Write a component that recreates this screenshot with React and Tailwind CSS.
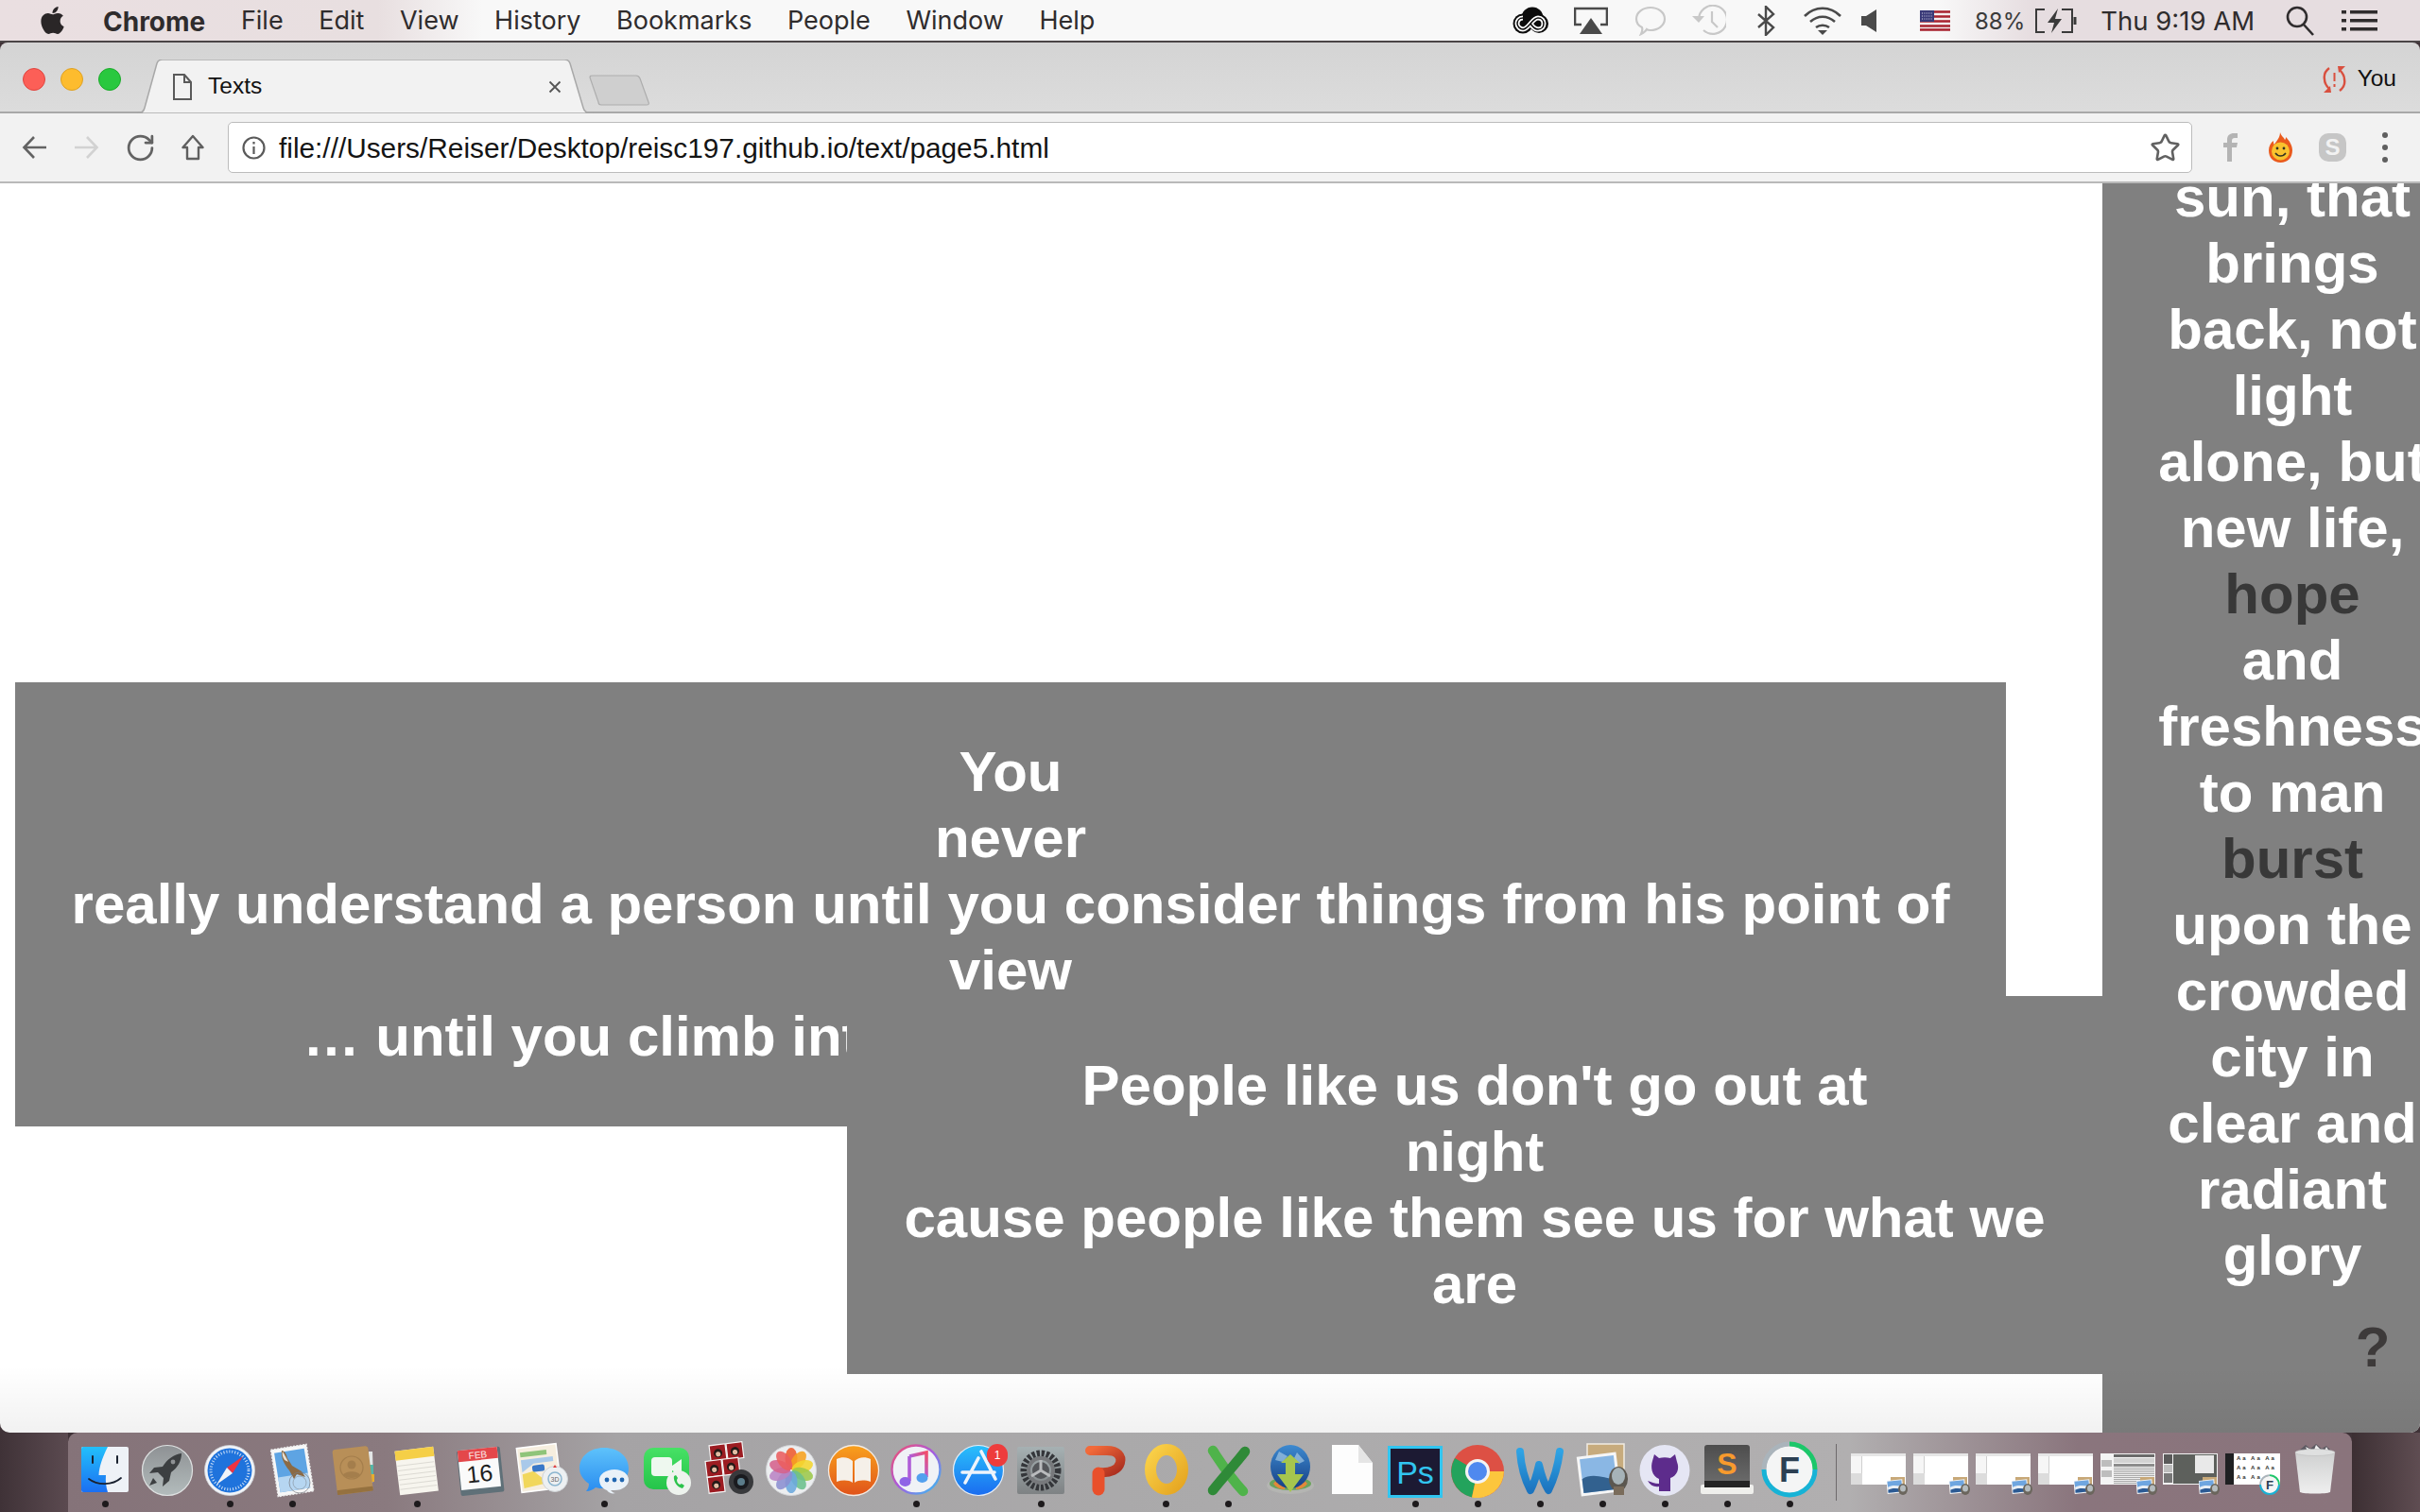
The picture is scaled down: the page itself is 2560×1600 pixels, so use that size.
import React from "react";
import { FaApple } from "react-icons/fa";
import { RotateCw, Star } from "lucide-react";

const Svg = ({ children }) => (
  <svg width="60" height="60" viewBox="0 0 60 60" className="block shrink-0">{children}</svg>
);

const Finder = () => (
  <Svg>
    <defs><linearGradient id="fb" x1="0" y1="0" x2="0" y2="1"><stop offset="0" stopColor="#22c0fb" /><stop offset="1" stopColor="#1b6ff2" /></linearGradient></defs>
    <rect x="5" y="6" width="50" height="48" rx="2" fill="#eef2f7" />
    <path d="M7 6H33C27 18 24 27 23.5 36H31C30.5 42 31 48 33 54H7a2 2 0 0 1-2-2V8a2 2 0 0 1 2-2Z" fill="url(#fb)" />
    <path d="M17 16v7M43 16v7" stroke="#1a2230" strokeWidth="2" strokeLinecap="round" />
    <path d="M13 40c9 7 25 7 34-1" fill="none" stroke="#1a2230" strokeWidth="1.8" strokeLinecap="round" />
  </Svg>
);
const Launchpad = () => (
  <Svg>
    <defs><linearGradient id="lp" x1="0" y1="0" x2="0" y2="1"><stop offset="0" stopColor="#8e9194" /><stop offset="1" stopColor="#b3bcbc" /></linearGradient></defs>
    <circle cx="30" cy="31" r="26.5" fill="url(#lp)" stroke="#dfe2e2" strokeWidth="1.2" />
    <path d="M45 13c-8 1-15 6-20 14l-9 1-5 6 9-1 6 6-1 9 7-6 2-9c7-5 11-12 11-20Z" fill="#3c3f41" />
    <circle cx="36" cy="22" r="2.4" fill="#8e9194" />
    <path d="M15 39l-4 8 8-3Z" fill="#3c3f41" />
  </Svg>
);
const Safari = () => (
  <Svg>
    <circle cx="30" cy="31" r="26.5" fill="#f1f4f8" stroke="#cfd3d8" strokeWidth="0.8" />
    <circle cx="30" cy="31" r="23.5" fill="#1f73dc" />
    <circle cx="30" cy="31" r="20" fill="none" stroke="#cfe1f7" strokeWidth="3" strokeDasharray="1 2" />
    <path d="M44 16 33 34 27 28Z" fill="#ef3340" />
    <path d="M16 46 33 34 27 28Z" fill="#f1f4f8" />
  </Svg>
);
const Mail = () => (
  <Svg>
    <g transform="rotate(-9 30 30)">
      <rect x="11" y="6" width="38" height="50" fill="#f7f7f7" stroke="#ededed" strokeWidth="1.5" strokeDasharray="2 1.4" />
      <rect x="14" y="10" width="32" height="42" fill="#5ea4e3" />
      <rect x="14" y="36" width="32" height="16" fill="#b6d6f1" />
    </g>
    <path d="M19 10c3 0 5 4 6 8l5 8 10 6 4 6-9-3-3 5-5-9c-5-6-9-13-8-21Z" fill="#8b6a44" />
    <path d="M20 11c2 3 4 7 6 11l-4-2c-2-3-3-6-2-9Z" fill="#e6e0d6" />
    <circle cx="38" cy="44" r="11" fill="none" stroke="#777a80" strokeWidth="1" opacity="0.7" />
    <circle cx="38" cy="44" r="7" fill="none" stroke="#777a80" strokeWidth="0.8" opacity="0.6" />
  </Svg>
);
const Contacts = () => (
  <Svg>
    <path d="M45 11h4l1 32-5 2Z" fill="#e3e6e6" />
    <path d="M46 25h4v10h-4Z" fill="#55b6a8" />
    <path d="M46 35h5v8h-5Z" fill="#e8ac2e" />
    <g transform="rotate(-7 28 30)"><rect x="9" y="7" width="38" height="48" rx="3" fill="#b88f58" /><rect x="9" y="50" width="38" height="5" rx="1" fill="#95713f" /></g>
    <circle cx="27" cy="28" r="12" fill="none" stroke="#a47e4c" strokeWidth="1.2" />
    <circle cx="27" cy="25" r="4.5" fill="#a47e4c" />
    <path d="M18 36c2-5 16-5 18 0-4 4-14 4-18 0Z" fill="#a47e4c" />
  </Svg>
);
const Notes = () => (
  <Svg>
    <g transform="rotate(-7 30 30)">
      <rect x="9" y="8" width="41" height="47" fill="#f7f5ee" />
      <rect x="9" y="8" width="41" height="10" fill="#f5cf47" />
      <path d="M10 24h39M10 29h39M10 34h39M10 39h39M10 44h39M10 49h39" stroke="#dcdad3" strokeWidth="1" />
    </g>
  </Svg>
);
const Calendar = () => (
  <Svg>
    <g transform="rotate(-6 30 30)">
      <rect x="8" y="8" width="46" height="48" rx="2" fill="#5f7078" />
      <rect x="9" y="8" width="42" height="42" fill="#fafafa" />
      <rect x="9" y="8" width="42" height="12" fill="#e4474a" />
      <text x="30" y="18" textAnchor="middle" fontFamily="Liberation Sans" fontSize="10" fill="#fbe7e7">FEB</text>
      <text x="30" y="43" textAnchor="middle" fontFamily="Liberation Sans" fontSize="25" fill="#1d1d1d">16</text>
    </g>
  </Svg>
);
const Maps = () => (
  <Svg>
    <g transform="rotate(-7 27 28)">
      <rect x="6" y="5" width="42" height="47" fill="#f6eedf" stroke="#fff" strokeWidth="1.5" />
      <rect x="9" y="10" width="28" height="5" fill="#8fc47a" />
      <path d="M9 18h34v5L22 23l-13 8Z" fill="#a9c9ea" />
      <path d="M9 33l12-2 14 14-26 3Z" fill="#f1d75c" />
      <rect x="20" y="25" width="13" height="7" rx="2" fill="#3a78c8" />
    </g>
    <circle cx="44" cy="40" r="13.5" fill="#edf0f2" stroke="#cfd3d6" />
    <circle cx="44" cy="40" r="7" fill="none" stroke="#8bb5cf" strokeWidth="1.5" />
    <text x="44" y="43" textAnchor="middle" fontFamily="Liberation Sans" fontSize="7" fill="#666">3D</text>
    <path d="M44 25l-2 3h4Z" fill="#e24242" />
  </Svg>
);
const Messages = () => (
  <Svg>
    <defs><linearGradient id="ms" x1="0" y1="0" x2="0" y2="1"><stop offset="0" stopColor="#5ec2fb" /><stop offset="1" stopColor="#2a8df0" /></linearGradient></defs>
    <path d="M30 7c15 0 26 9 26 22 0 12-11 21-26 21-3 0-6 0-9-1-2 2-6 4-10 4 2-2 3-5 3-8C8 41 4 35 4 29 4 16 15 7 30 7Z" fill="url(#ms)" />
    <path d="M41 30c9 0 15 5 15 11s-6 11-15 11l-4 0c1 1 3 3 5 3-3 1-7 0-9-3-5-2-8-6-8-11 0-6 7-11 16-11Z" fill="#e9f1f8" />
    <circle cx="33" cy="41" r="2.4" fill="#1f65b0" /><circle cx="41" cy="41" r="2.4" fill="#1f65b0" /><circle cx="49" cy="41" r="2.4" fill="#1f65b0" />
  </Svg>
);
const FaceTime = () => (
  <Svg>
    <defs><linearGradient id="ft" x1="0" y1="0" x2="0" y2="1"><stop offset="0" stopColor="#47e165" /><stop offset="1" stopColor="#25c44a" /></linearGradient></defs>
    <rect x="6" y="7" width="48" height="44" rx="10" fill="url(#ft)" />
    <rect x="14" y="17" width="22" height="20" rx="4" fill="#eef8ef" />
    <path d="M36 26l10-7v18l-10-6Z" fill="#eef8ef" />
    <circle cx="43" cy="44" r="13" fill="#eef3ee" />
    <path d="M38 37c-1 5 3 12 9 13l2-3-3-2-2 1c-2-1-3-3-3-5l1-2-2-3Z" fill="#2cc34c" />
  </Svg>
);
const PhotoBooth = () => {
  const Cell = ({ x, y }) => (
    <g>
      <rect x={x} y={y} width="17" height="17" fill="#9c1c22" stroke="#f5f5f5" strokeWidth="1.2" />
      <circle cx={x + 8.5} cy={y + 9} r="4.5" fill="#241a18" />
      <circle cx={x + 8.5} cy={y + 10} r="2.6" fill="#e3bca4" />
    </g>
  );
  return (
    <Svg>
      <g transform="rotate(-7 26 28)">
        <Cell x={12} y={3} /><Cell x={30} y={3} /><Cell x={6} y={19} /><Cell x={24} y={19} /><Cell x={6} y={36} />
      </g>
      <circle cx="43" cy="43" r="13" fill="#38393c" />
      <circle cx="43" cy="43" r="8" fill="#1a1b1f" />
      <circle cx="43" cy="43" r="4" fill="#5b7c8a" />
    </Svg>
  );
};
const Photos = () => {
  const cols = ["#ee5b2e", "#f7a21f", "#f4d62e", "#9cc84a", "#6bc08c", "#6ba9dd", "#8b8fd0", "#b984c4", "#d5628c", "#ea5d5f"];
  return (
    <Svg>
      <circle cx="30" cy="31" r="26.5" fill="#eceef0" stroke="#d3d5d8" />
      {cols.map((c, i) => (
        <ellipse key={c} cx="30" cy="18.5" rx="6.5" ry="11.5" fill={c} opacity="0.88" transform={`rotate(${i * 36} 30 31)`} />
      ))}
    </Svg>
  );
};
const Books = () => (
  <Svg>
    <defs><linearGradient id="bk" x1="0" y1="0" x2="0" y2="1"><stop offset="0" stopColor="#f9a11d" /><stop offset="1" stopColor="#e0531a" /></linearGradient></defs>
    <circle cx="30" cy="31" r="26.5" fill="url(#bk)" stroke="#f3ece5" strokeWidth="1.3" />
    <path d="M12 19c6-3 13-2 17 2v23c-4-3-11-3-17-1ZM48 19c-6-3-13-2-17 2v23c4-3 11-3 17-1Z" fill="#f5f0e9" />
  </Svg>
);
const Music = () => (
  <Svg>
    <defs>
      <linearGradient id="mr" x1="0" y1="0" x2="1" y2="1"><stop offset="0" stopColor="#f4506c" /><stop offset="0.5" stopColor="#a65be0" /><stop offset="1" stopColor="#2fc5f2" /></linearGradient>
      <linearGradient id="mn" x1="1" y1="0" x2="0" y2="1"><stop offset="0" stopColor="#f24f6a" /><stop offset="0.55" stopColor="#b05ed8" /><stop offset="1" stopColor="#4e9df0" /></linearGradient>
    </defs>
    <circle cx="30" cy="30" r="25.5" fill="#f0f2f6" stroke="url(#mr)" strokeWidth="2.4" />
    <path d="M23 16l18-4v26" fill="none" stroke="url(#mn)" strokeWidth="3.6" />
    <path d="M23 16v26" stroke="#b05ed8" strokeWidth="3.6" />
    <ellipse cx="18.5" cy="43" rx="6" ry="5" fill="#8f63e6" />
    <ellipse cx="36.5" cy="39" rx="6" ry="5" fill="#53a0ee" />
  </Svg>
);
const AppStore = () => (
  <div className="relative">
    <Svg>
      <defs><linearGradient id="as" x1="0" y1="0" x2="0" y2="1"><stop offset="0" stopColor="#2ac0fb" /><stop offset="1" stopColor="#1a6cf0" /></linearGradient></defs>
      <circle cx="30" cy="31" r="26.5" fill="url(#as)" stroke="#e7eef6" strokeWidth="1.2" />
      <path d="M33 11l15 29M30 18L16 44M13 33h34" stroke="#eef4fb" strokeWidth="3.6" strokeLinecap="round" />
    </Svg>
    <span className="absolute right-[-1px] top-[3px] flex h-[24px] w-[22px] items-center justify-center rounded-full bg-[#ee3c3c] font-['Liberation_Sans'] text-[12px] text-white">1</span>
  </div>
);
const SysPrefs = () => (
  <Svg>
    <defs><linearGradient id="sp" x1="0" y1="0" x2="0" y2="1"><stop offset="0" stopColor="#a6b1b3" /><stop offset="1" stopColor="#7e8284" /></linearGradient></defs>
    <rect x="5" y="6" width="50" height="50" rx="2" fill="url(#sp)" />
    <circle cx="30" cy="31" r="18" fill="none" stroke="#34363a" strokeWidth="7" strokeDasharray="3.2 1.8" />
    <circle cx="30" cy="31" r="13" fill="none" stroke="#77797c" strokeWidth="4" />
    <circle cx="30" cy="31" r="9" fill="#54565a" />
    <path d="M30 31V20M30 31l10 6M30 31l-10 6" stroke="#b9bbbd" strokeWidth="3" />
  </Svg>
);
const PowerP = () => (
  <Svg>
    <defs><linearGradient id="pw" x1="0" y1="0" x2="1" y2="1"><stop offset="0" stopColor="#f26a3a" /><stop offset="1" stopColor="#a92c1e" /></linearGradient></defs>
    <path d="M16 10h18c11 0 16 6 14 13s-10 11-22 10" fill="none" stroke="url(#pw)" strokeWidth="10" strokeLinecap="round" />
    <path d="M25 34v17" fill="none" stroke="#e9502b" strokeWidth="13" strokeLinecap="round" />
  </Svg>
);
const Outlook = () => (
  <Svg>
    <defs><linearGradient id="ol" x1="0" y1="0" x2="1" y2="1"><stop offset="0" stopColor="#fad149" /><stop offset="1" stopColor="#e5a521" /></linearGradient></defs>
    <ellipse cx="31" cy="30" rx="17" ry="21" fill="none" stroke="url(#ol)" strokeWidth="12" />
  </Svg>
);
const Excel = () => (
  <Svg>
    <path d="M14 10c8 12 18 28 32 43" stroke="#4fb34a" strokeWidth="10.500" strokeLinecap="round" fill="none" />
    <path d="M48 11C38 24 25 38 14 52" stroke="#2f8a38" strokeWidth="10.500" strokeLinecap="round" fill="none" />
  </Svg>
);
const Globe = () => (
  <Svg>
    <defs><linearGradient id="gl" x1="0" y1="0" x2="0" y2="1"><stop offset="0" stopColor="#3d8ad0" /><stop offset="1" stopColor="#163f85" /></linearGradient></defs>
    <ellipse cx="30" cy="47" rx="25" ry="9" fill="#b4b5b2" />
    <ellipse cx="30" cy="45" rx="22" ry="7" fill="#6aa35c" />
    <path d="M12 45c4-5 9-6 12-6v12c-5 0-9-2-12-6ZM48 45c-4-5-9-6-12-6v12c5 0 9-2 12-6Z" fill="#e2883a" />
    <ellipse cx="30" cy="27" rx="21" ry="23" fill="url(#gl)" />
    <path d="M18 11l9 5-5 6-8-2ZM37 12l8 9-6 3-5-6Z" fill="#a4c8e2" opacity="0.7" />
    <path d="M30 14l10 9h-5v12h9L30 54 16 35h9V23h-5Z" fill="#a6c64e" />
  </Svg>
);
const Doc = () => (
  <Svg>
    <path d="M8 4h28l15 19v33H8Z" fill="#fdfdfd" />
    <path d="M36 4v19h15Z" fill="#e5e5e5" />
  </Svg>
);
const Ps = () => (
  <div className="flex h-[60px] w-[58px] items-start justify-center">
    <div className="mt-[5px] flex h-[55px] w-[58px] items-center justify-center border-[3px] border-[#31c5f0] bg-[#1c1a33] font-['Liberation_Sans'] text-[34px] leading-none text-[#31c5f0]">Ps</div>
  </div>
);
const Chrome = () => (
  <Svg>
    <circle cx="30" cy="32" r="28" fill="#dd5044" />
    <path d="M30 32 6 18A28 28 0 0 0 24 59.400Z" fill="#23a35c" />
    <path d="M30 32h28A28 28 0 0 1 24 59.400Z" fill="#fcc63d" />
    <circle cx="30" cy="32" r="13" fill="#f4f4f4" />
    <circle cx="30" cy="32" r="10" fill="#4f89ef" />
  </Svg>
);
const Word = () => (
  <Svg>
    <defs><linearGradient id="wd" x1="0" y1="0" x2="0" y2="1"><stop offset="0" stopColor="#2fa3e4" /><stop offset="1" stopColor="#1c74bf" /></linearGradient></defs>
    <path d="M9 11c1 14 4 28 11 41 4-8 7-18 9-27 2 9 5 19 10 27 6-12 10-26 12-41" fill="none" stroke="url(#wd)" strokeWidth="8" strokeLinecap="round" strokeLinejoin="round" />
  </Svg>
);
const Preview = () => (
  <Svg>
    <rect x="14" y="3" width="39" height="42" fill="#c7ab7d" stroke="#f1ece3" strokeWidth="1.5" />
    <g transform="rotate(-7 26 34)">
      <rect x="5" y="14" width="42" height="42" fill="#f6f6f6" />
      <rect x="8" y="17" width="36" height="36" fill="#8ab7e4" />
      <path d="M8 38c10-5 22 0 36 6v9H8Z" fill="#32618f" />
    </g>
    <ellipse cx="47" cy="40" rx="10" ry="13" fill="#5b5750" />
    <ellipse cx="47" cy="37" rx="7" ry="9" fill="#a6b3b8" />
    <rect x="42" y="48" width="11" height="9" fill="#7a6c5b" />
  </Svg>
);
const GitHub = () => (
  <Svg>
    <ellipse cx="30" cy="31" rx="26.5" ry="27" fill="#e5e6f4" />
    <path d="M19 14l5 4c4-1 8-1 12 0l5-4 2 8c3 7 0 15-7 17v14H24v-5c-5 1-9-1-12-6 4 1 7 3 12 3v-5c-8-3-9-13-7-19Z" fill="#5d2c8c" />
  </Svg>
);
const Sublime = () => (
  <Svg>
    <defs><linearGradient id="sb" x1="0" y1="0" x2="0" y2="1"><stop offset="0" stopColor="#4d4d4d" /><stop offset="1" stopColor="#6e6e6e" /></linearGradient></defs>
    <rect x="2" y="46" width="56" height="10" rx="2" fill="#efefec" />
    <path d="M6 7a3 3 0 0 1 3-3h42a3 3 0 0 1 3 3v42H6Z" fill="url(#sb)" />
    <rect x="6" y="42" width="48" height="7" fill="#242424" />
    <text x="30" y="35" textAnchor="middle" fontFamily="Liberation Sans" fontWeight="700" fontSize="32" fill="#f79a2d">S</text>
  </Svg>
);
const Fontlab = ({ size = 60 }) => (
  <svg width={size} height={size} viewBox="0 0 60 60" className="block">
    <circle cx="30" cy="30" r="25" fill="#f4f5f5" />
    <path d="M30 3A27 27 0 0 1 57 30" fill="none" stroke="#1cc76a" strokeWidth="5" />
    <path d="M57 30A27 27 0 0 1 3 30" fill="none" stroke="#17b3d6" strokeWidth="5" />
    <path d="M3 30A27 27 0 0 1 30 3" fill="none" stroke="#aab4bb" strokeWidth="5" />
    <text x="30" y="43" textAnchor="middle" fontFamily="Liberation Sans" fontWeight="700" fontSize="36" fill="#2b3f52">F</text>
  </svg>
);
const Mini = ({ badge }) => (
  <div className={badge ? "absolute bottom-[-11px] right-[0px]" : "absolute bottom-[-11px] right-[-2px]"}>
    {badge ? <Fontlab size={22} /> : (
      <svg width="22" height="19" viewBox="0 0 22 19">
        <rect x="4" y="0" width="15" height="9" fill="#c7a878" />
        <g transform="rotate(-6 9 10)"><rect x="0" y="3" width="17" height="14" fill="#f4f4f4" /><rect x="1" y="4" width="15" height="12" fill="#6fa6e0" /><path d="M1 10c4-2 10-1 15 1v5H1Z" fill="#e8eef5" /><path d="M1 13c4-2 10-1 15 1v2H1Z" fill="#2c5a93" /></g>
        <ellipse cx="17" cy="13" rx="5" ry="6" fill="#6b665d" />
        <ellipse cx="17" cy="12" rx="3" ry="3.600" fill="#b5bcbf" />
      </svg>
    )}
  </div>
);
const Thumb = ({ kind }) => (
  <div className="relative mt-[13px] h-[33px] w-[58px] bg-white">
    {kind === "blank" && (
      <>
        <div className="h-[3px] bg-[#e6e6e6]" />
        <div className="absolute bottom-0 left-0 top-[3px] w-[12px] border-r border-[#d0d0d0] bg-[#f6f6f6]" />
        <div className="absolute bottom-0 left-0 h-[12px] w-[12px] bg-[#dcdcdc]" />
      </>
    )}
    {kind === "web" && (
      <div className="flex h-full gap-[2px] bg-[#f4f4f4] p-[1px]">
        <div className="mt-[6px] flex w-[11px] flex-col gap-[4px]">
          <div className="h-[7px] bg-[#bdbdbd]" />
          <div className="h-[7px] bg-[#bdbdbd]" />
        </div>
        <div className="flex flex-1 flex-col gap-[1px]">
          <div className="h-[3px] bg-[#6a6a6a]" />
          <div className="h-[5px] bg-[#d2d2d2]" />
          <div className="h-[3px] bg-[#8c8c8c]" />
          <div className="flex-1 bg-[repeating-linear-gradient(#aaa_0_1px,#eee_1px_2px)]" />
        </div>
      </div>
    )}
    {kind === "photo" && (
      <div className="flex h-full gap-[1px] bg-[#f2f2f2] p-[1px]">
        <div className="flex w-[9px] flex-col gap-[1px]">
          <div className="h-[10px] bg-[#5a5a5a]" />
          <div className="h-[8px] bg-[#bdbdbd]" />
          <div className="h-[10px] bg-[#777]" />
        </div>
        <div className="flex-1 bg-[#5d605c]" />
        <div className="absolute right-[4px] top-[2px] h-[19px] w-[20px] bg-[#e9e9e9]" />
      </div>
    )}
    {kind === "font" && (
      <div className="flex h-full">
        <div className="w-[9px] bg-[#1f2022]" />
        <div className="flex-1 overflow-hidden pl-[3px] font-['Liberation_Sans'] text-[6px] font-bold leading-[10px] tracking-[2px] text-[#333]">Aa Aa Aa Aa Aa Aa Aa Aa Aa</div>
      </div>
    )}
    <Mini badge={kind === "font"} />
  </div>
);
const ThumbWrap = ({ kind }) => <div className="h-[60px] w-[58px]"><Thumb kind={kind} /></div>;
const Trash = () => (
  <Svg>
    <defs><linearGradient id="tr" x1="0" y1="0" x2="0" y2="1"><stop offset="0" stopColor="#cfd0d0" /><stop offset="1" stopColor="#efefef" /></linearGradient></defs>
    <path d="M13 10l7-6 5 4 6-5 6 5 5-3 6 6-7 4H18Z" fill="#5d5a62" />
    <path d="M20 6l6 3-3 4ZM31 4l5 5-8 3ZM42 6l3 5-6 1Z" fill="#efefef" />
    <path d="M9 12h42l-5 42c-4 2-28 2-32 0Z" fill="url(#tr)" />
    <ellipse cx="30" cy="12" rx="21" ry="3.5" fill="#dfe0e0" stroke="#bdbdbd" strokeWidth="0.6" />
  </Svg>
);

const dockItems = [
  [Finder, true], [Launchpad, false], [Safari, true], [Mail, true], [Contacts, false], [Notes, true],
  [Calendar, false], [Maps, false], [Messages, true], [FaceTime, false], [PhotoBooth, false], [Photos, false],
  [Books, false], [Music, true], [AppStore, false], [SysPrefs, true], [PowerP, false], [Outlook, true],
  [Excel, true], [Globe, false], [Doc, false], [Ps, true], [Chrome, true], [Word, true], [Preview, true],
  [GitHub, true], [Sublime, true], [Fontlab, true],
];

const DockSlot = ({ children, dot }) => (
  <div className="flex w-[66px] shrink-0 flex-col items-center">
    <div className="flex h-[60px] items-start justify-center">{children}</div>
    <div className={dot ? "mt-[3px] h-[7px] w-[7px] rounded-full bg-[#1d1a1c]" : "mt-[3px] h-[7px] w-[7px]"} />
  </div>
);

const Dock = () => (
  <div className="flex h-[84px]">
    <div className="w-[72px] shrink-0 bg-[linear-gradient(90deg,#3f3237,#5b4a50)]" />
    <div className="flex w-[2416px] rounded-t-[10px] bg-[linear-gradient(90deg,#857379_0,#8a7a7f_14%,#a5a3a5_24%,#abaaab_50%,#b1afb0_78%,#8a757d_88%,#8a747c_100%)] pl-[6px] pt-[9px]">
      {dockItems.map(([Icon, dot], i) => (
        <DockSlot key={i} dot={dot}><Icon /></DockSlot>
      ))}
      <div className="ml-[16px] mr-[11px] mt-[3px] h-[60px] w-px shrink-0 bg-[#6e6a6c]" />
      {["blank", "blank", "blank", "blank", "web", "photo", "font"].map((k, i) => (
        <DockSlot key={i}><ThumbWrap kind={k} /></DockSlot>
      ))}
      <DockSlot><Trash /></DockSlot>
    </div>
    <div className="flex-1 bg-[linear-gradient(90deg,#3c2f33,#5f4d52)]" />
  </div>
);

const MenuBar = () => (
  <div className="flex h-[45px] items-center border-b-2 border-[#4a4546] bg-[linear-gradient(90deg,#eadfe1_0,#e8dfe0_400px,#f8f8f8_510px,#f8f8f8_2050px,#e6dde0_2150px,#e6dde0_100%)] font-['Inter','Liberation_Sans',sans-serif] text-[27px] text-[#2f2c2d]">
    <FaApple className="ml-[39px] text-[33px] text-[#2a2627]" />
    <div className="ml-[37px] flex items-center gap-[37.6px] pt-[2px]">
      <span className="text-[28px] font-bold">Chrome</span>
      <span>File</span>
      <span>Edit</span>
      <span>View</span>
      <span>History</span>
      <span>Bookmarks</span>
      <span>People</span>
      <span>Window</span>
      <span>Help</span>
    </div>
    <div className="ml-auto flex items-center pr-[45px]">
      <svg width="38" height="30" viewBox="0 0 38 30" fill="none">
        <circle cx="11" cy="18" r="10.500" fill="#0c0c0c" />
        <circle cx="21" cy="12" r="11.500" fill="#0c0c0c" />
        <circle cx="28" cy="18" r="10" fill="#0c0c0c" />
        <path d="M11 12c-4 0-6 3-6 6s3 6 6 6c6 0 10-12 16-12 4 0 6 3 6 6s-2 6-6 6c-4 0-6-3-8-6" stroke="#fff" strokeWidth="5" />
        <path d="M11 12c-4 0-6 3-6 6s3 6 6 6c6 0 10-12 16-12 4 0 6 3 6 6s-2 6-6 6c-4 0-6-3-8-6" stroke="#0c0c0c" strokeWidth="1.500" />
      </svg>
      <svg className="ml-[27px]" width="36" height="30" viewBox="0 0 36 30" fill="none">
        <path d="M8 19H1V2h34v17h-7" stroke="#4a4a4a" strokeWidth="2.6" />
        <path d="M18 12 30 29H6Z" fill="#4a4a4a" />
      </svg>
      <svg className="ml-[28px]" width="34" height="32" viewBox="0 0 34 32" fill="none" stroke="#c8c8c8" strokeWidth="2.2">
        <path d="M17 2c8 0 15 5 15 12s-7 12-15 12c-1 0-3 0-4-1-1 2-4 4-6 5 1-2 2-4 1-7-4-2-6-5-6-9C2 7 9 2 17 2Z" />
      </svg>
      <svg className="ml-[27px]" width="36" height="33" viewBox="0 0 36 33" fill="none" stroke="#c8c8c8" strokeWidth="2.2">
        <path d="M7 16a15 15 0 1 1 5 11" />
        <path d="M21 7v11l6 6" />
        <path d="M0 12h13l-6 7Z" fill="#c8c8c8" stroke="none" />
      </svg>
      <svg className="ml-[32px]" width="20" height="32" viewBox="0 0 20 32" fill="none" stroke="#4a4a4a" strokeWidth="2.4">
        <path d="M2 9l16 14-8 8V1l8 8L2 23" />
      </svg>
      <svg className="ml-[29px]" width="42" height="30" viewBox="0 0 42 30" fill="none" stroke="#4a4a4a" strokeWidth="2.6">
        <path d="M2 10c11-11 27-11 38 0" />
        <path d="M8 16c8-7 18-7 26 0" />
        <path d="M14 22c4-3 10-3 14 0" />
        <path d="M16 25h10l-5 5Z" fill="#4a4a4a" stroke="none" />
      </svg>
      <svg className="ml-[20px]" width="16" height="24" viewBox="0 0 16 24">
        <path d="M0 7h5l11-7v24L5 17H0Z" fill="#4a4a4a" />
      </svg>
      <svg className="ml-[46px]" width="32" height="22" viewBox="0 0 32 22">
        <rect width="32" height="22" fill="#f3eeee" />
        <path d="M0 1.5h32M0 6.5h32M0 11.5h32M0 16.5h32M0 20.5h32" stroke="#a8232f" strokeWidth="2.4" />
        <rect width="15" height="12" fill="#3a3a78" />
        <path d="M2 3h11M2 6h11M2 9h11" stroke="#d8d8e8" strokeWidth="1.2" strokeDasharray="1 1.4" />
      </svg>
      <span className="ml-[26px] pt-[2px] text-[24px] text-[#3b3b3b]">88%</span>
      <svg className="ml-[10px]" width="46" height="28" viewBox="0 0 46 28" fill="none" stroke="#3a3a3a" strokeWidth="2">
        <path d="M11 2H2v24h9M29 2h11v24H29" />
        <path d="M43 10v8" strokeWidth="3" />
        <path d="M25 1 14 16h7l-3 11 11-15h-7Z" fill="#3a3a3a" stroke="none" />
      </svg>
      <span className="ml-[24px] whitespace-nowrap pt-[2px] text-[27.5px]">Thu 9:19 AM</span>
      <svg className="ml-[33px]" width="30" height="32" viewBox="0 0 30 32" fill="none" stroke="#2f2c2d" strokeWidth="2.6">
        <circle cx="12" cy="12" r="10" />
        <path d="M19 20l10 11" />
      </svg>
      <svg className="ml-[29px]" width="38" height="22" viewBox="0 0 38 22" fill="#2f2c2d">
        <rect width="5" height="3.5" /><rect x="9" width="29" height="3.5" />
        <rect y="9" width="5" height="3.5" /><rect x="9" y="9" width="29" height="3.5" />
        <rect y="18" width="5" height="3.5" /><rect x="9" y="18" width="29" height="3.5" />
      </svg>
    </div>
  </div>
);

const TabStrip = () => (
  <div className="relative flex h-[75px] rounded-t-[8px] border-b-2 border-[#a8a8a8] bg-[linear-gradient(#d4d4d4,#dcdcdc)] pt-[18px]">
    <div className="ml-[24px] mt-[9px] flex h-[24px] shrink-0 gap-[16px]">
      <span className="h-[24px] w-[24px] rounded-full border border-[#e0443e] bg-[#fc5f57]" />
      <span className="h-[24px] w-[24px] rounded-full border border-[#dea123] bg-[#fdbc2e]" />
      <span className="h-[24px] w-[24px] rounded-full border border-[#1aab29] bg-[#29c83f]" />
    </div>
    <div className="relative ml-[17px] h-[57px] w-[484px] shrink-0">
      <svg className="absolute inset-0" width="484" height="57" viewBox="0 0 484 57">
        <path d="M0 57C5 57 7 55 8 51L21 4C22 1 24 0 27 0H452C455 0 457 1 458 4L472 51C473 55 475 57 484 57Z" fill="#f2f2f2" stroke="#a8a8a8" strokeWidth="1.5" />
      </svg>
      <div className="relative flex h-full items-center pl-[38px] font-['Liberation_Sans',sans-serif] text-[24.5px] text-[#111]">
        <svg width="20" height="28" viewBox="0 0 20 28" fill="none" stroke="#5a5a5a" strokeWidth="2">
          <path d="M1 1h11l7 8v18H1Z" /><path d="M12 1v8h7" />
        </svg>
        <span className="ml-[17px]">Texts</span>
        <svg className="ml-[303px]" width="14" height="14" viewBox="0 0 14 14" stroke="#555" strokeWidth="1.8">
          <path d="M1.5 1.5l11 11M12.5 1.5l-11 11" />
        </svg>
      </div>
    </div>
    <svg className="ml-[-6px] mt-[16px] shrink-0" width="66" height="33" viewBox="0 0 66 33">
      <path d="M1 3C1 1 2 1 4 1H50C52 1 53 2 54 4L63 29C64 31 63 32 61 32H13C11 32 10 31 10 29Z" fill="#cfcfcf" stroke="#adadad" strokeWidth="1.2" />
    </svg>
    <div className="ml-auto flex items-center gap-[12px] pb-[14px] pr-[25px] font-['Liberation_Sans',sans-serif] text-[24.5px] text-[#111]">
      <svg width="25" height="30" viewBox="0 0 25 30" fill="none" stroke="#d9503f" strokeWidth="2.4">
        <path d="M7 3C3 6 1 10 2 15c0 4 3 8 5 10" />
        <path d="M18 27c4-3 6-7 5-12 0-4-3-8-5-10" />
        <path d="M1 29h8l-1-7ZM24 1h-8l1 7Z" fill="#d9503f" stroke="none" />
        <path d="M12.5 8v9M12.5 20v3" strokeWidth="2" />
      </svg>
      <span>You</span>
    </div>
  </div>
);

const Toolbar = () => (
  <div className="flex h-[74px] items-center border-b-2 border-[#b9b9b9] bg-[#f2f2f2] pl-[23px] pr-[32px]">
    <svg className="shrink-0" width="26" height="26" viewBox="0 0 26 26" fill="none" stroke="#636363" strokeWidth="2.6">
      <path d="M26 13H3M13 2 2.500 13 13 24" />
    </svg>
    <svg className="ml-[30px] shrink-0" width="26" height="26" viewBox="0 0 26 26" fill="none" stroke="#d2d2d2" strokeWidth="2.6">
      <path d="M0 13h23M13 2l10.500 11L13 24" />
    </svg>
    <div className="ml-[30px] flex h-[36px] w-[27px] shrink-0 items-center justify-center">
      <RotateCw size={33} strokeWidth={2} className="shrink-0 text-[#636363]" />
    </div>
    <svg className="ml-[30px] shrink-0" width="24" height="28" viewBox="0 0 24 28" fill="none" stroke="#5f5f5f" strokeWidth="2.4">
      <path d="M12 2 1.5 14H6v12h12V14h4.5Z" strokeLinejoin="round" />
    </svg>
    <div className="ml-[25px] flex h-[54px] w-[2078px] shrink-0 items-center rounded-[5px] border border-[#bcbcbc] bg-white pl-[14px] pr-[11px]">
      <svg width="25" height="25" viewBox="0 0 25 25" fill="none" stroke="#5a5a5a" strokeWidth="2.2">
        <circle cx="12.5" cy="12.5" r="11" />
        <path d="M12.5 11v8M12.5 6v2.6" />
      </svg>
      <span className="ml-[14px] whitespace-nowrap pt-[2px] font-['Liberation_Sans',sans-serif] text-[29.8px] leading-none text-[#141414]">file:///Users/Reiser/Desktop/reisc197.github.io/text/page5.html</span>
      <Star size={33} strokeWidth={1.9} className="ml-auto text-[#616161]" />
    </div>
    <svg className="ml-[32px] shrink-0" width="16" height="30" viewBox="0 0 16 30">
      <path d="M5 30V15H1v-5h4V7c0-5 3-7 7-7h4v5h-3c-2 0-3 1-3 3v2h6l-1 5h-5v15Z" fill="#b4b4b4" />
    </svg>
    <svg className="ml-[33px] shrink-0" width="25" height="32" viewBox="0 0 25 32">
      <path d="M12 0c1 4 4 5 5 8 1-1 1-2 1-3 4 4 7 9 7 14 0 8-5 13-12.500 13S0 27 0 19c0-4 2-8 5-10 0 2 0 3 1 4 2-4 6-7 6-13Z" fill="#ea5a1c" />
      <circle cx="12.500" cy="20" r="9.500" fill="#f9c22e" />
      <circle cx="9" cy="17" r="1.400" fill="#332" /><circle cx="16" cy="17" r="1.400" fill="#332" />
      <path d="M7 22c3 4 8 4 11 0" stroke="#332" strokeWidth="1.500" fill="none" />
    </svg>
    <div className="ml-[28px] flex h-[30px] w-[29px] shrink-0 items-center justify-center rounded-[10px] bg-[#c6c6c6] font-['Liberation_Sans',sans-serif] text-[24px] font-bold leading-none text-[#f2f2f2]">S</div>
    <div className="ml-[38px] flex shrink-0 flex-col gap-[7px]">
      <span className="h-[6px] w-[6px] rounded-full bg-[#5f5f5f]" />
      <span className="h-[6px] w-[6px] rounded-full bg-[#5f5f5f]" />
      <span className="h-[6px] w-[6px] rounded-full bg-[#5f5f5f]" />
    </div>
  </div>
);

const Line = ({ children, dark }) => (
  <span className={dark ? "block whitespace-nowrap text-[#383838]" : "block whitespace-nowrap"}>{children}</span>
);

const sunLines = [
  ["sun, that"], ["brings"], ["back, not"], ["light"], ["alone, but"], ["new life,"], ["hope", true], ["and"],
  ["freshness"], ["to man"], ["burst", true], ["upon the"], ["crowded"], ["city in"], ["clear and"], ["radiant"], ["glory"],
];

const Page = () => (
  <div className="relative flex min-h-0 flex-1 overflow-hidden rounded-b-[10px] bg-white font-['Liberation_Sans',Arial,sans-serif] text-[60px] font-bold leading-[70px] text-white">
    <div className="w-[2224px] shrink-0">
      <div className="ml-[16px] mt-[528px] h-[470px] w-[2106px] bg-[#808080] py-[60px] text-center">
        <Line>You</Line>
        <Line>never</Line>
        <Line>really understand a person until you consider things from his point of</Line>
        <Line>view</Line>
        <Line>… until you climb into his skin and walk around in it.</Line>
      </div>
      <div className="relative ml-[896px] mt-[-138px] h-[400px] w-[1328px] bg-[#808080] py-[60px] text-center">
        <Line>People like us don't go out at</Line>
        <Line>night</Line>
        <Line>cause people like them see us for what we</Line>
        <Line>are</Line>
      </div>
    </div>
    <div className="flex-1 overflow-hidden bg-[#808080]">
      <div className="mt-[-20px] w-[402px] text-center">
        {sunLines.map(([t, d]) => <Line key={t} dark={d}>{t}</Line>)}
        <div className="mt-[27px] pl-[170px] text-[#3d3a3a]">?</div>
      </div>
    </div>
    <div className="pointer-events-none absolute bottom-0 left-0 right-0 h-[70px] bg-[linear-gradient(transparent,rgba(0,0,0,0.055))]" />
  </div>
);

export default function App() {
  return (
    <div className="flex h-[1600px] w-[2560px] flex-col overflow-hidden bg-[#3f3237]">
      <MenuBar />
      <div className="flex h-[1471px] flex-col rounded-b-[10px]">
        <TabStrip />
        <Toolbar />
        <Page />
      </div>
      <Dock />
    </div>
  );
}
